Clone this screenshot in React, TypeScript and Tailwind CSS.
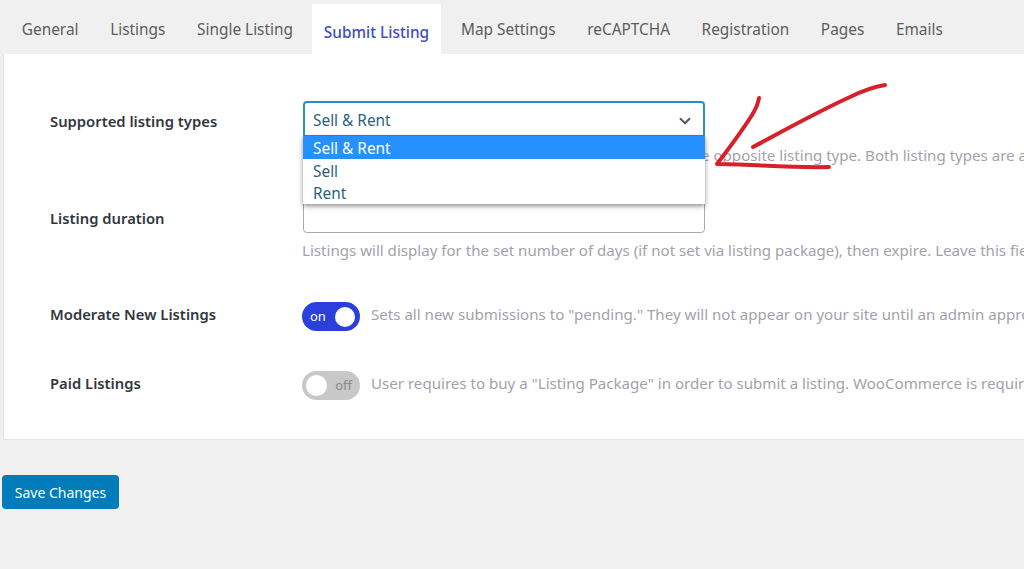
import { ChevronDown } from 'lucide-react';

const tabs = [
  'General',
  'Listings',
  'Single Listing',
  'Submit Listing',
  'Map Settings',
  'reCAPTCHA',
  'Registration',
  'Pages',
  'Emails',
];

function Toggle({ on }: { on: boolean }) {
  if (on) {
    return (
      <div className="flex h-[29px] w-[58px] shrink-0 items-center justify-between rounded-full bg-[#2a3fdc] pr-[5px] pl-[8px]">
        <span className="text-[13px] leading-none text-white">on</span>
        <span className="h-[20px] w-[20px] rounded-full bg-white" />
      </div>
    );
  }
  return (
    <div className="flex h-[29px] w-[58px] shrink-0 items-center justify-between rounded-full bg-[#c8c8c8] pr-[8px] pl-[4px]">
      <span className="h-[21px] w-[21px] rounded-full bg-white" />
      <span className="text-[13px] leading-none text-[#8a8a8a]">off</span>
    </div>
  );
}

function Label({ children }: { children: string }) {
  return (
    <div className="w-[253px] shrink-0 pt-[9px] text-[14.8px] font-semibold text-[#32373c]">
      {children}
    </div>
  );
}

export default function App() {
  return (
    <div
      className="relative h-[569px] w-[1024px] overflow-hidden bg-[#f0f0f0] text-[15.4px]"
      style={{ fontFamily: '"Noto Sans", sans-serif' }}
    >
      <div className="flex h-[54px] items-end pl-[6px]">
        {tabs.map((tab) =>
          tab === 'Submit Listing' ? (
            <div
              key={tab}
              className="mr-[4px] ml-[3px] flex h-[50px] items-center bg-white px-[12px] pt-[7px] font-medium whitespace-nowrap text-[#3f4dbb]"
            >
              {tab}
            </div>
          ) : (
            <div
              key={tab}
              className="flex h-[50px] items-center px-[15.8px] pt-[1px] whitespace-nowrap text-[#5c5c5c]"
            >
              {tab}
            </div>
          ),
        )}
      </div>

      <div className="ml-[3px] h-[386px] border-b border-l border-[#e4e4e4] bg-white pt-[47px] pl-[46px]">
        <div className="flex h-[97px] items-start">
          <Label>Supported listing types</Label>
          <div className="relative w-[402px] shrink-0">
            <div className="flex h-[36px] items-center justify-between rounded-t-[4px] border-2 border-[#2f8fb8] pt-[4px] pr-[9px] pl-[8px] text-[#2c5f7c]">
              <span>Sell &amp; Rent</span>
              <ChevronDown className="h-[18px] w-[18px] text-[#50575e]" strokeWidth={2.5} />
            </div>
            <div className="absolute top-[35px] left-0 z-10 w-full whitespace-nowrap bg-white text-[#2c5f7c] shadow-[0_2px_5px_rgba(0,0,0,0.45)]">
              <div className="flex h-[23px] items-center bg-[#2690ff] px-[10px] pt-[2px] text-white">
                Sell &amp; Rent
              </div>
              <div className="flex h-[22px] items-center px-[10px] pt-[3px]">Sell</div>
              <div className="flex h-[23px] items-center px-[10px] pt-[2px]">Rent</div>
            </div>
            <div className="mt-[7px] whitespace-nowrap text-[15.1px] text-[#a5a1aa]">
              <span className="ml-[398px]">
                e opposite listing type. Both listing types are a
              </span>
            </div>
          </div>
        </div>

        <div className="flex h-[96px] items-start">
          <Label>Listing duration</Label>
          <div className="w-[722px] shrink-0">
            <div className="h-[35px] w-[402px] rounded-[4px] border border-[#a9a9a9] bg-white" />
            <div className="mt-[6px] -ml-[1px] whitespace-nowrap text-[15.1px] text-[#a5a1aa]">
              Listings will display for the set number of days (if not set via listing package), then expire. Leave this fie
            </div>
          </div>
        </div>

        <div className="flex h-[69px] items-start">
          <Label>Moderate New Listings</Label>
          <div className="mt-[8px] -ml-[1px] flex items-center gap-[11px] whitespace-nowrap text-[15.1px] text-[#a5a1aa]">
            <Toggle on />
            <span className="pb-[4px]">
              Sets all new submissions to "pending." They will not appear on your site until an admin appro
            </span>
          </div>
        </div>

        <div className="flex items-start">
          <Label>Paid Listings</Label>
          <div className="mt-[8px] -ml-[1px] flex items-center gap-[11px] whitespace-nowrap text-[15.1px] text-[#a5a1aa]">
            <Toggle on={false} />
            <span className="pb-[4px]">
              User requires to buy a "Listing Package" in order to submit a listing. WooCommerce is requir
            </span>
          </div>
        </div>
      </div>

      <button className="mt-[35px] ml-[2px] h-[34px] w-[117px] rounded-[4px] bg-[#007cba] text-[14px] text-white">
        Save Changes
      </button>

      {/* hand drawn arrow on top of the screenshot */}
      <svg
        className="pointer-events-none absolute top-0 left-0 z-20"
        width="1024"
        height="569"
        fill="none"
        stroke="#d8202a"
        strokeLinecap="round"
        strokeLinejoin="round"
        strokeWidth="4"
      >
        <path d="M759 98C758 104 757 107 752 115C742 131 730 147 717 164C745 164 790 168 829 167" />
        <path d="M753 147C785 130 815 113 850 97C862 91 873 87 885 85" />
      </svg>
    </div>
  );
}
